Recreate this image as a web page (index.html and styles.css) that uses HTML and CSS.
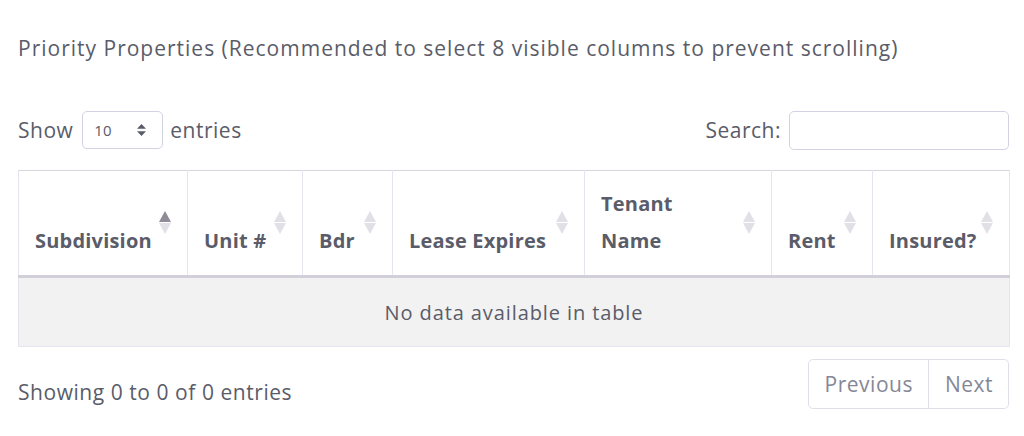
FILE: index.html
```html
<!DOCTYPE html>
<html>
<head>
<meta charset="utf-8">
<link rel="stylesheet" href="styles.css">
</head>
<body>
<div class="wrap">
  <h6 class="title">Priority Properties (Recommended to select 8 visible columns to prevent scrolling)</h6>
  <div class="controls">
    <label class="length">Show
      <span class="select"><span class="sel-val">10</span>
        <svg class="sel-arrows" width="11" height="14" viewBox="0 0 11 14"><path d="M1 5.8 L5.5 1 L10 5.8 Z M1 8.2 L5.5 13 L10 8.2 Z" fill="#5a5c69"/></svg>
      </span>
      entries</label>
    <label class="search">Search: <span class="input"></span></label>
  </div>
  <table class="tbl">
    <colgroup>
      <col style="width:169px"><col style="width:115px"><col style="width:90px"><col style="width:192px"><col style="width:187px"><col style="width:101px"><col style="width:137px">
    </colgroup>
    <thead>
      <tr>
        <th class="asc">Subdivision<span class="sort"></span></th>
        <th>Unit #<span class="sort"></span></th>
        <th>Bdr<span class="sort"></span></th>
        <th>Lease Expires<span class="sort"></span></th>
        <th>Tenant<br>Name<span class="sort"></span></th>
        <th>Rent<span class="sort"></span></th>
        <th>Insured?<span class="sort"></span></th>
      </tr>
    </thead>
    <tbody>
      <tr><td colspan="7" class="empty">No data available in table</td></tr>
    </tbody>
  </table>
  <div class="footer">
    <div class="info">Showing 0 to 0 of 0 entries</div>
    <div class="pager">
      <span class="pg">Previous</span><span class="pg">Next</span>
    </div>
  </div>
</div>
</body>
</html>
```
FILE: styles.css
```css
html, body { margin: 0; padding: 0; background: #fff; }
body {
  font-family: "Open Sans", "Noto Sans", sans-serif;
  color: #5a5c69;
  font-size: 21px;
  letter-spacing: 0.5px;
}
.wrap { padding: 0 15px 0 18px; }
.title {
  margin: 0;
  padding-top: 34px;
  font-size: 21px;
  font-weight: 400;
  line-height: 28px;
  letter-spacing: 1px;
}
.controls {
  margin-top: 48px;
  display: flex;
  justify-content: space-between;
  align-items: center;
  height: 40px;
}
.length, .search { display: flex; align-items: center; line-height: 28px; }
.select {
  display: inline-flex;
  align-items: center;
  justify-content: space-between;
  box-sizing: border-box;
  width: 81px;
  height: 38px;
  margin: 0 7px 0 9px;
  padding: 0 15px 0 11px;
  border: 1px solid #d1d3e2;
  border-radius: 5px;
  font-size: 15px;
  letter-spacing: 0;
}
.sel-arrows { display: block; }
.input {
  display: inline-block;
  box-sizing: border-box;
  width: 220px;
  height: 39px;
  margin-left: 8px;
  border: 1px solid #d1d3e2;
  border-radius: 5px;
}
.tbl {
  margin-top: 20px;
  width: 991px;
  border-collapse: collapse;
  table-layout: fixed;
}
.tbl th {
  position: relative;
  text-align: left;
  vertical-align: bottom;
  font-size: 20px;
  font-weight: 700;
  letter-spacing: 0.2px;
  line-height: 37px;
  padding: 14px 30px 16px 16px;
  border: 1px solid #e3e6f0;
  border-top: 1px solid #d7d5de;
  border-bottom: 3px solid #d2cfda;
}
.sort {
  position: absolute;
  right: 16px;
  top: 40px;
  width: 12px;
  height: 23px;
}
.sort::before, .sort::after {
  content: "";
  position: absolute;
  left: 0;
  border-left: 6px solid transparent;
  border-right: 6px solid transparent;
}
.sort::before { top: 0; border-bottom: 11px solid #e2e0e7; }
.sort::after { top: 12px; border-top: 11px solid #e2e0e7; }
.asc .sort::before { border-bottom-color: #8f8b98; }
.tbl td {
  border: 1px solid #e3e6f0;
  background: #f2f2f2;
}
.empty {
  height: 68px;
  text-align: center;
  padding: 0;
  font-size: 20px;
  letter-spacing: 0.9px;
}
.footer {
  display: flex;
  justify-content: space-between;
  align-items: center;
  margin-top: 12px;
}
.info { padding-top: 15px; letter-spacing: 0.55px; }
.pager {
  display: flex;
  border: 1px solid #dddfeb;
  border-radius: 5px;
  height: 48px;
  color: #858796;
}
.pg {
  display: flex;
  align-items: center;
  padding: 0 15px 0 16px;
}
.pg + .pg { border-left: 1px solid #dddfeb; }
```
